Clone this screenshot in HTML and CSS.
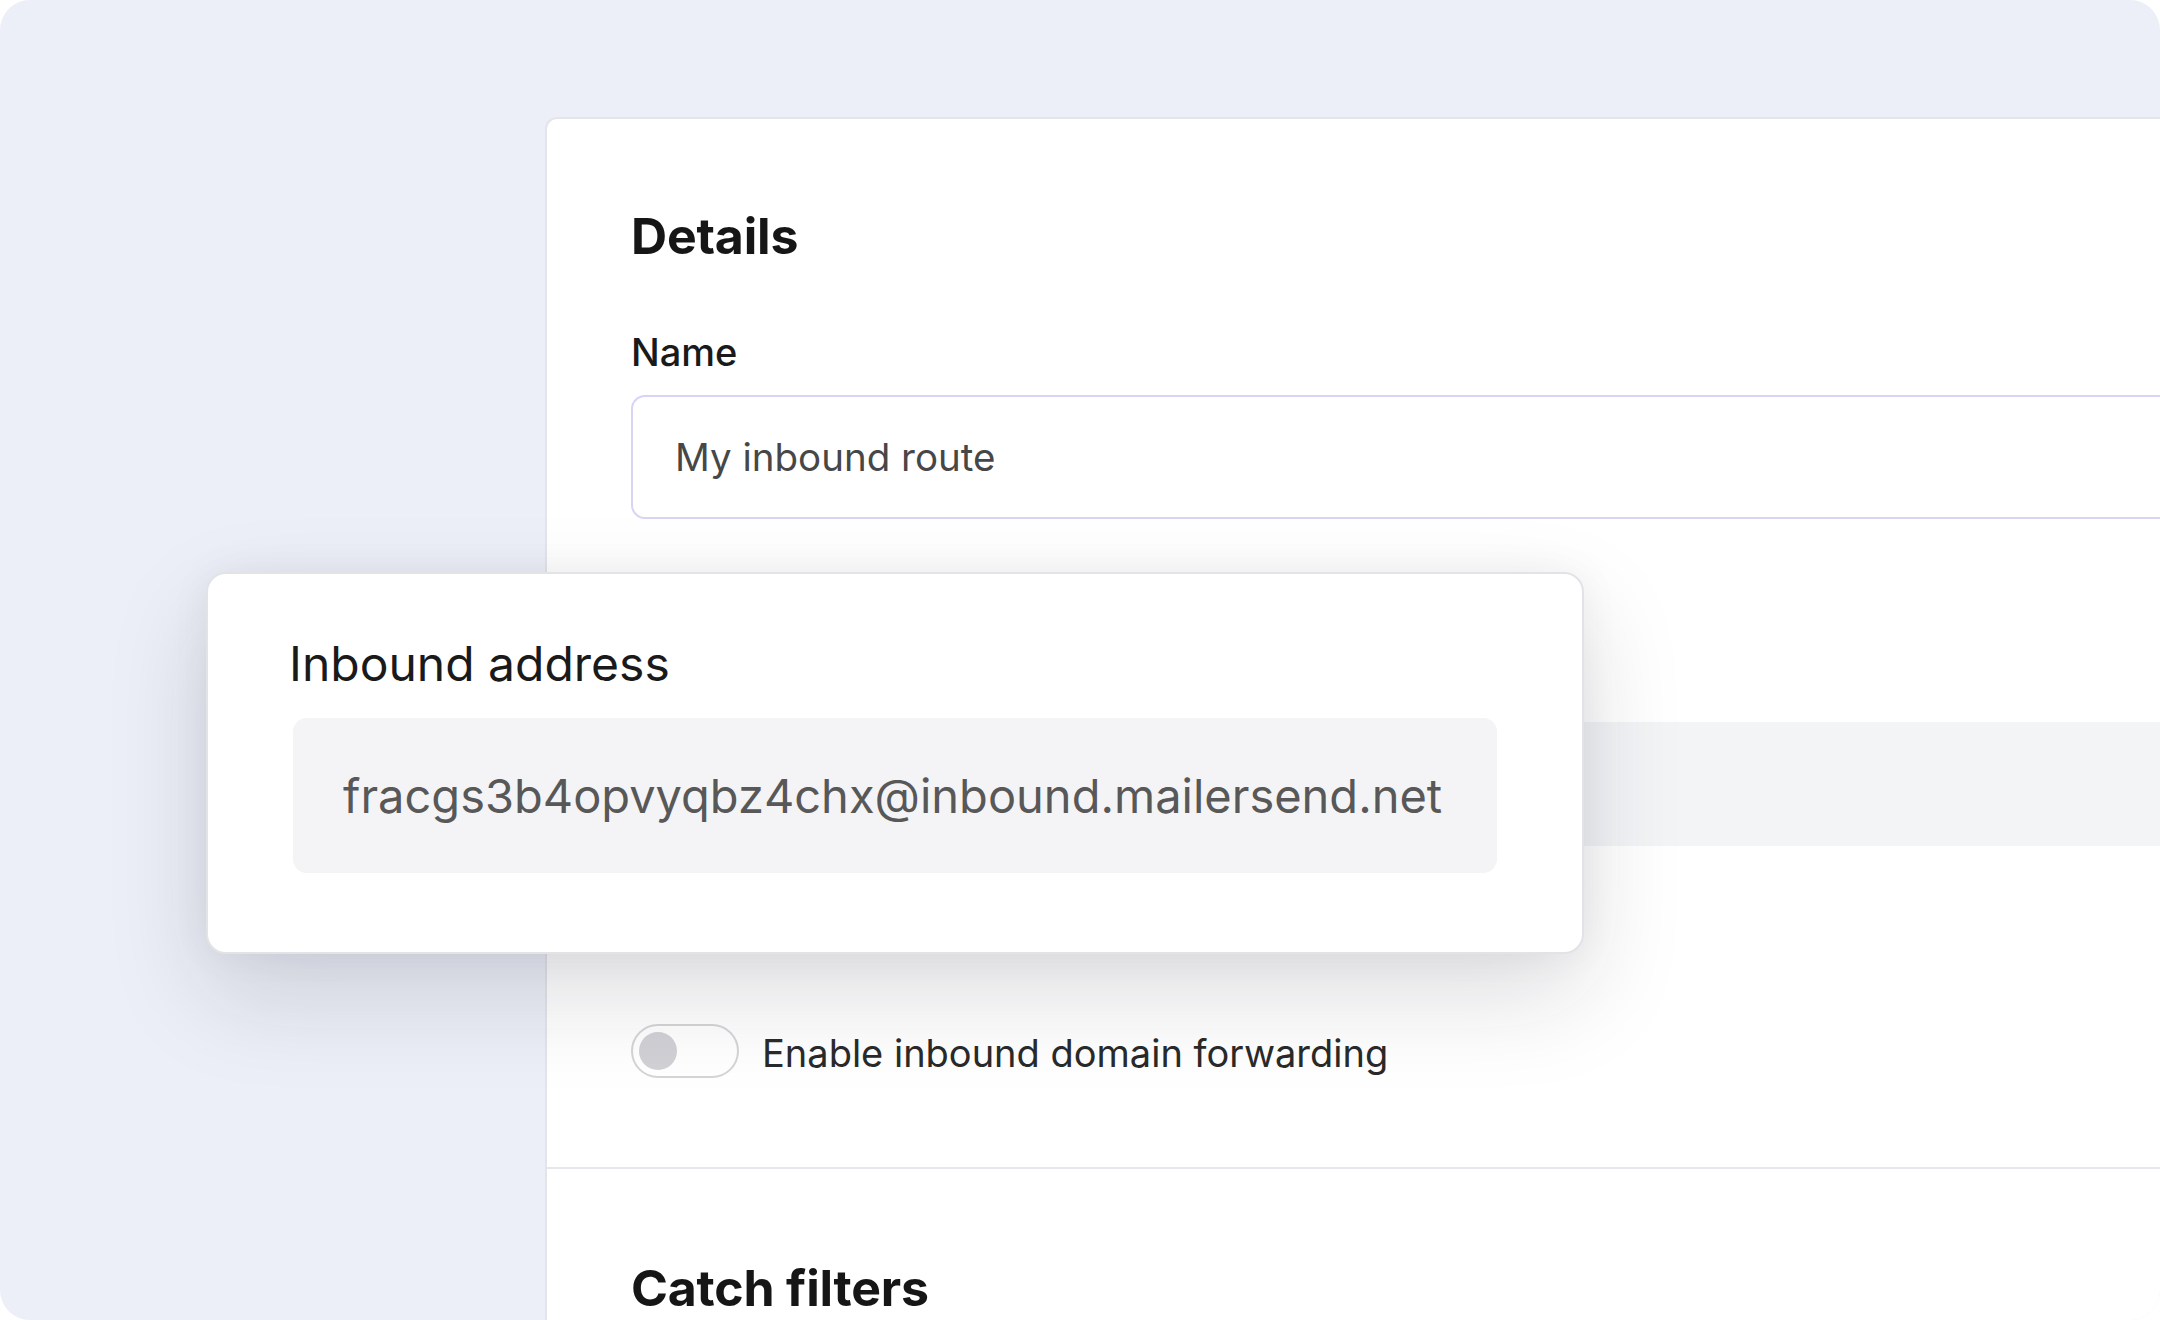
FILE: index.html
```html
<!DOCTYPE html>
<html lang="en">
<head>
    <meta charset="UTF-8">
    <meta name="viewport" content="width=device-width, initial-scale=1.0">
    <title>MailerSend - Inbound route</title>
    <link rel="stylesheet" href="styles.css">
</head>
<body>
    <div class="stage">
        <div class="route-card">
            <div class="card-section details">
                <h2 class="section-title">Details</h2>
                <div class="field-label">Name</div>
                <div class="text-input">My inbound route</div>
                <div class="readonly-field"></div>
                <div class="switch-row">
                    <span class="switch"><span class="switch-knob"></span></span>
                    <span class="switch-label">Enable inbound domain forwarding</span>
                </div>
            </div>
            <div class="card-section filters">
                <h2 class="section-title">Catch filters</h2>
            </div>
        </div>

        <div class="address-popup">
            <div class="popup-title">Inbound address</div>
            <div class="address-box">fracgs3b4opvyqbz4chx@inbound.mailersend.net</div>
        </div>
    </div>
</body>
</html>
```

FILE: styles.css
```css
body {
    margin: 0;
    padding: 0;
    background: #ffffff;
    font-family: Inter, "Noto Sans", Arial, sans-serif;
    color: #1a1a1a;
}

.stage {
    position: relative;
    width: 2160px;
    height: 1320px;
    box-sizing: border-box;
    padding: 117px 0 0 545px;
    background: #eceff7;
    border-radius: 30px;
    overflow: hidden;
}

.route-card {
    width: 1700px;
    min-height: 1400px;
    background: #ffffff;
    border: 2px solid #e4e5ea;
    border-right: none;
    border-bottom: none;
    border-radius: 12px 0 0 0;
}

.card-section {
    padding-left: 84px;
}

.card-section.details {
    padding-top: 87px;
    padding-bottom: 89px;
}

.card-section.filters {
    padding-top: 89px;
    border-top: 2px solid #e6e7eb;
}

.section-title {
    margin: 0;
    font-size: 50px;
    line-height: 60px;
    font-weight: 700;
    letter-spacing: -0.2px;
    color: #161616;
}

.field-label {
    margin-top: 63px;
    font-size: 38px;
    line-height: 46px;
    font-weight: 500;
    color: #1a1a1a;
}

.text-input {
    margin-top: 20px;
    height: 124px;
    box-sizing: border-box;
    display: flex;
    align-items: center;
    padding-left: 42px;
    border: 2px solid #d8d4f6;
    border-right: none;
    border-radius: 14px 0 0 14px;
    font-size: 38.5px;
    line-height: 46px;
    color: #474747;
}

.readonly-field {
    margin-top: 203px;
    height: 124px;
    background: #f3f4f6;
    border-radius: 14px 0 0 14px;
}

.switch-row {
    margin-top: 178px;
    display: flex;
    align-items: center;
    gap: 23px;
}

.switch {
    width: 108px;
    height: 54px;
    box-sizing: border-box;
    display: flex;
    align-items: center;
    padding-left: 6px;
    border: 2px solid #d5d5d8;
    border-radius: 27px;
}

.switch-knob {
    width: 38px;
    height: 38px;
    border-radius: 50%;
    background: #d1d1d6;
}

.switch-label {
    padding-top: 3px;
    font-size: 38px;
    line-height: 46px;
    color: #2a2a2a;
}

/* floating card over the form */
.address-popup {
    position: absolute;
    left: 206px;
    top: 572px;
    width: 1378px;
    height: 382px;
    box-sizing: border-box;
    padding: 61px 85px 0 85px;
    background: #ffffff;
    border: 2px solid #e2e3e7;
    border-radius: 20px;
    box-shadow: 0 40px 100px rgba(25, 30, 45, 0.15), 0 0 40px rgba(25, 30, 45, 0.05);
}

.popup-title {
    margin-left: -4px;
    font-size: 48px;
    line-height: 58px;
    font-weight: 400;
    color: #1a1a1a;
}

.address-box {
    margin-top: 25px;
    height: 155px;
    display: flex;
    align-items: center;
    padding-left: 50px;
    background: #f4f4f6;
    border-radius: 14px;
    font-size: 47px;
    line-height: 58px;
    color: #585858;
}
```
